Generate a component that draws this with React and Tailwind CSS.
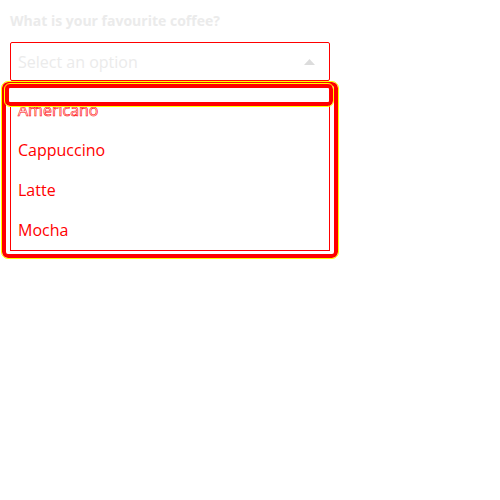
import React from 'react'

const options = ['Americano', 'Cappuccino', 'Latte', 'Mocha']

export default function App() {
  return (
    <div className="relative w-[500px] h-[500px] bg-white font-['Open_Sans',sans-serif]">
      <div className="pt-[11px] px-[10px] w-[340px]">
        <label className="block text-[14px] leading-[19px] font-bold text-[#ebebeb]">
          What is your favourite coffee?
        </label>

        {/* Select trigger */}
        <div className="mt-[12px] w-[320px] h-[39px] border border-[#ff0000] rounded-[2px] flex items-center justify-between pl-[7px] pr-[14px]">
          <span className="text-[16px] text-[#ebebeb]">Select an option</span>
          <svg width="11" height="6" viewBox="0 0 11 6">
            <path d="M0 6 L5.5 0 L11 6 Z" fill="#dcdcdc" />
          </svg>
        </div>
      </div>

      {/* Dropdown */}
      <div className="absolute left-[2px] top-[82px] w-[336px] border-4 border-[#ff0000] rounded-[6px] outline outline-1 outline-[#ffff00] px-[4px] pb-[3px]">
        <ul className="border border-[#ff0000] pt-[3px]">
          {options.map((o, i) => (
            <li
              key={o}
              className={`h-[40px] flex items-center pl-[7px] text-[16px] ${
                i === 0
                  ? 'text-white [-webkit-text-stroke:0.6px_#ff0000]'
                  : 'text-[#ff0000]'
              }`}
            >
              {o}
            </li>
          ))}
        </ul>
      </div>

      {/* Focused option highlight */}
      <div className="absolute left-[5px] top-[84px] w-[328px] h-[22px] border-4 border-[#ff0000] rounded-[5px] bg-white outline outline-1 outline-[#ffff00]" />
    </div>
  )
}
